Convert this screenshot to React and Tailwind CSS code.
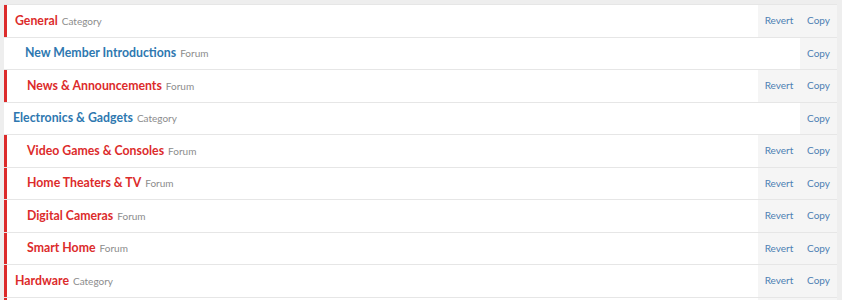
import React from "react";

const nodes = [
  { title: "General", type: "Category", depth: 0, changed: true },
  { title: "New Member Introductions", type: "Forum", depth: 1, changed: false },
  { title: "News & Announcements", type: "Forum", depth: 1, changed: true },
  { title: "Electronics & Gadgets", type: "Category", depth: 0, changed: false },
  { title: "Video Games & Consoles", type: "Forum", depth: 1, changed: true },
  { title: "Home Theaters & TV", type: "Forum", depth: 1, changed: true },
  { title: "Digital Cameras", type: "Forum", depth: 1, changed: true },
  { title: "Smart Home", type: "Forum", depth: 1, changed: true },
  { title: "Hardware", type: "Category", depth: 0, changed: true },
];

const NodeRow = ({ node }) => {
  const pad = node.depth
    ? node.changed
      ? "pl-[20px]"
      : "pl-[21px]"
    : node.changed
    ? "pl-[8px]"
    : "pl-[9px]";

  return (
    <div className="flex h-[32.5px] items-stretch border-b border-[#e6e6e6]">
      <div
        className={
          node.changed
            ? `flex-1 flex items-center border-l-[3px] border-[#dc2b2b] ${pad}`
            : `flex-1 flex items-center ${pad}`
        }
      >
        <span
          className={
            node.changed
              ? "text-[12.3px] font-bold text-[#dc2b2b]"
              : "text-[12.3px] font-bold text-[#2e78b0]"
          }
        >
          {node.title}
        </span>
        <span className="ml-[4px] text-[10px] text-[#8c8c8c] mt-[1px]">
          {node.type}
        </span>
      </div>
      <div
        className={
          node.changed
            ? "w-[42px] flex items-center justify-center bg-[#f5f5f5] text-[10px] text-[#4d7fb3]"
            : "w-[42px]"
        }
      >
        {node.changed && "Revert"}
      </div>
      <div className="w-[37px] flex items-center justify-center bg-[#f5f5f5] text-[10px] text-[#4d7fb3]">
        Copy
      </div>
    </div>
  );
};

export default function App() {
  return (
    <div
      className="h-[300px] overflow-hidden bg-[#eeeeee] pt-[4px] pl-[4px] pr-[5px]"
      style={{ fontFamily: 'Lato, "Open Sans", sans-serif' }}
    >
      <div className="bg-white border-t border-[#e6e6e6]">
        {nodes.map((node) => (
          <NodeRow key={node.title} node={node} />
        ))}
        <div className="flex h-[32.5px] border-l-[3px] border-[#dc2b2b]">
          <div className="flex-1" />
          <div className="w-[42px] bg-[#f5f5f5]" />
          <div className="w-[37px] bg-[#f5f5f5]" />
        </div>
      </div>
    </div>
  );
}
